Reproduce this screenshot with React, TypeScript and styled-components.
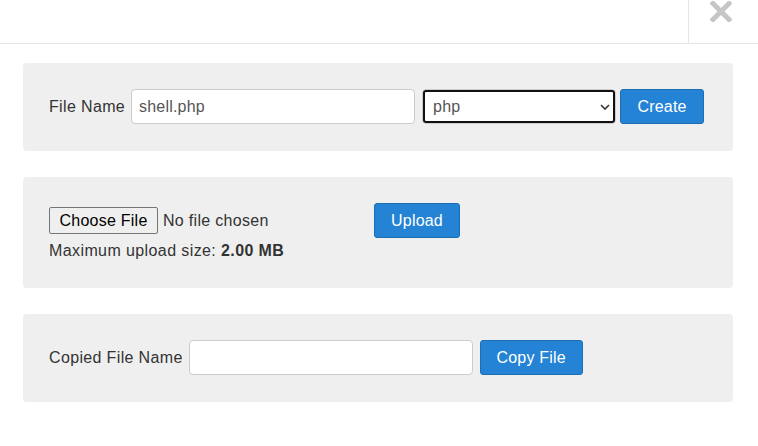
import React from "react";
import styled, { createGlobalStyle } from "styled-components";

const Global = createGlobalStyle`
  html, body { margin: 0; padding: 0; background: #fff; }
  body {
    font-family: "Liberation Sans", Arial, sans-serif;
    font-size: 16px;
    color: #333;
    letter-spacing: 0.2px;
  }
  * { box-sizing: border-box; }
`;

const Page = styled.div`
  width: 758px;
  height: 446px;
  background: #fff;
`;

const Header = styled.header`
  height: 44px;
  display: flex;
  justify-content: flex-end;
  border-bottom: 1px solid #e5e5e5;
`;

const CloseBox = styled.button`
  width: 70px;
  height: 43px;
  border: 0;
  border-left: 1px solid #e5e5e5;
  background: transparent;
  padding: 1px 0 0 21px;
  display: flex;
  align-items: flex-start;
  cursor: pointer;
`;

const Content = styled.main`
  width: 710px;
  margin: 19px 0 0 23px;
  display: flex;
  flex-direction: column;
  gap: 26px;
`;

const Panel = styled.section<{ $pb?: number }>`
  background: #efefef;
  border-radius: 4px;
  padding: 26px 26px ${(p) => p.$pb ?? 27}px;
`;

const Row = styled.div`
  display: flex;
  align-items: center;
  height: 35px;
`;

const Label = styled.label`
  color: #333;
  margin-right: 6px;
  white-space: nowrap;
  letter-spacing: 0.35px;
`;

const TextInput = styled.input`
  width: 284px;
  height: 35px;
  border: 1px solid #ccc;
  border-radius: 4px;
  background: #fff;
  padding: 0 7px;
  font: inherit;
  letter-spacing: 0.2px;
  color: #555;
  outline: none;
`;

const SelectWrap = styled.div`
  position: relative;
  margin-left: 7px;
  margin-right: 4px;
`;

const Select = styled.select`
  appearance: none;
  width: 194px;
  height: 35px;
  border: 1px solid #ccc;
  border-radius: 4px;
  background: #fff;
  padding: 0 10px;
  font: inherit;
  letter-spacing: 0.2px;
  color: #555;
  outline: 2px solid #111;
  outline-offset: -3px;
`;

const Chevron = styled.svg`
  position: absolute;
  right: 6px;
  top: 15px;
  pointer-events: none;
`;

const PrimaryButton = styled.button<{ $w: number }>`
  width: ${(p) => p.$w}px;
  height: 35px;
  border: 1px solid #1d6db3;
  border-radius: 3px;
  background: #2483d5;
  color: #fff;
  font: inherit;
  letter-spacing: 0.2px;
  padding: 0;
  cursor: pointer;
`;

const FileArea = styled.div`
  width: 325px;
  display: flex;
  align-items: center;
  gap: 5px;
`;

const FileButton = styled.button`
  width: 109px;
  height: 27px;
  border: 1px solid #767676;
  border-radius: 2px;
  background: #efefef;
  color: #000;
  font: inherit;
  letter-spacing: 0.25px;
  padding: 0;
`;

const FileStatus = styled.span`
  color: #333;
  letter-spacing: 0.3px;
`;

const Hint = styled.p`
  margin: 3px 0 0;
  line-height: 20px;
  color: #333;
  letter-spacing: 0.4px;
`;

const Spacer = styled.span<{ $w: number }>`
  display: inline-block;
  width: ${(p) => p.$w}px;
`;

export default function App() {
  return (
    <Page>
      <Global />
      <Header>
        <CloseBox aria-label="Close">
          <svg width="22" height="21" viewBox="0 0 22 21">
            <path d="M3 2.5 L19 18.5 M19 2.5 L3 18.5" stroke="#c6c6c6" strokeWidth="5" strokeLinecap="square" />
          </svg>
        </CloseBox>
      </Header>
      <Content>
        <Panel>
          <Row>
            <Label>File Name</Label>
            <TextInput defaultValue="shell.php" />
            <SelectWrap>
              <Select defaultValue="php">
                <option value="php">php</option>
                <option value="html">html</option>
                <option value="txt">txt</option>
              </Select>
              <Chevron width="10" height="6" viewBox="0 0 10 6">
                <path d="M1 1 L5 5 L9 1" fill="none" stroke="#333" strokeWidth="1.6" />
              </Chevron>
            </SelectWrap>
            <PrimaryButton $w={84}>Create</PrimaryButton>
          </Row>
        </Panel>
        <Panel>
          <Row>
            <FileArea>
              <FileButton>Choose File</FileButton>
              <FileStatus>No file chosen</FileStatus>
            </FileArea>
            <PrimaryButton $w={86}>Upload</PrimaryButton>
          </Row>
          <Hint>
            Maximum upload size: <b>2.00 MB</b>
          </Hint>
        </Panel>
        <Panel>
          <Row>
            <Label>Copied File Name</Label>
            <TextInput />
            <Spacer $w={7} />
            <PrimaryButton $w={103}>Copy File</PrimaryButton>
          </Row>
        </Panel>
      </Content>
    </Page>
  );
}
